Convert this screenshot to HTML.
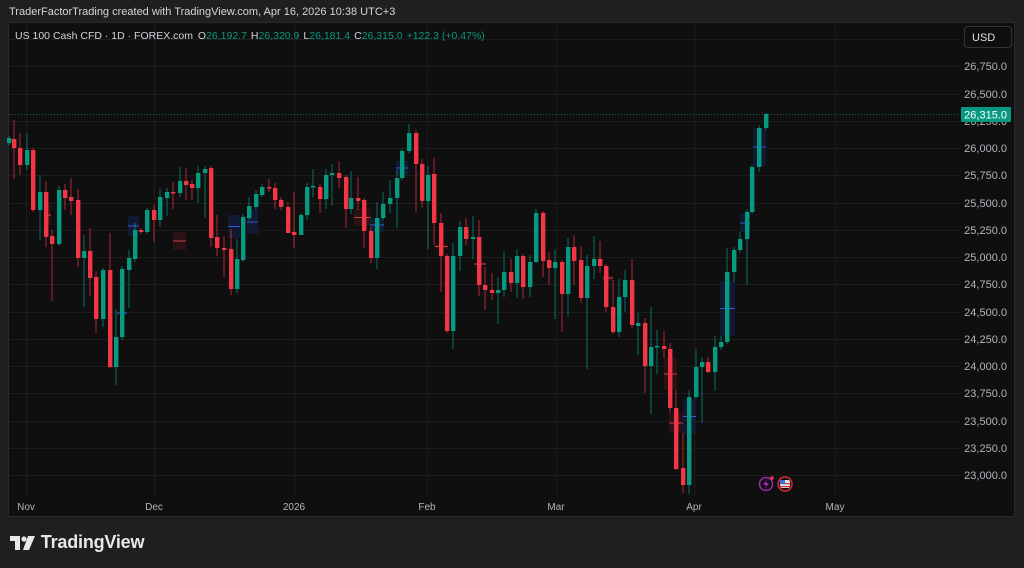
<!DOCTYPE html>
<html><head><meta charset="utf-8"><style>
html,body{margin:0;padding:0;background:#1f1f1f;width:1024px;height:568px;overflow:hidden;font-family:"Liberation Sans",sans-serif}
.top{position:absolute;left:9px;top:6px;font-size:11px;color:#d6d6d6}
.panel{position:absolute;left:8px;top:22px;width:1007px;height:495px;background:#0f0f0f;border:1px solid #2a2a2a;box-sizing:border-box}
svg{position:absolute;left:0;top:0}
.logo{position:absolute;left:10px;top:532px;color:#e8e8e8;font-size:18px;font-weight:bold;letter-spacing:-0.2px}
</style></head><body>
<div class="top">TraderFactorTrading created with TradingView.com, Apr 16, 2026 10:38 UTC+3</div>
<div class="panel"></div>
<svg id="s" width="1024" height="568" font-family="Liberation Sans, sans-serif"></svg>
<div class="logo"><span style="display:inline-block;width:26px;vertical-align:-2px"><svg width="26" height="14" viewBox="0 0 26 14" style="position:static"><path d="M0 0h10v14H5V5H0z" fill="#e8e8e8"/><circle cx="14" cy="3" r="2.6" fill="#e8e8e8"/><path d="M18 0h7l-6 14h-6z" fill="#e8e8e8"/></svg></span> TradingView</div>
<script>
const s=document.getElementById('s');let h='';
// grid
[39,66,94,121,148,175,203,230,257,284,312,339,366,393,421,448,475].forEach(y=>h+=`<line x1="9" x2="960" y1="${y}.5" y2="${y}.5" stroke="#1c1c1c"/>`);
[26,154,294,427,556,694,835].forEach(x=>h+=`<line x1="${x}.5" x2="${x}.5" y1="23" y2="496" stroke="#1c1c1c"/>`);
// shaded boxes
[[44,51,205,225,0],[128,139,216,236,1],[247,258,210,234,1],[117,127,311,315,1],[173,186,232,250,0],[228,240,215,238,1],[354,371,209,226,0],[370,384,218,232,1],[396,408,161,175,1],[435,448,244,249,0],[474,486,263,265,0],[603,613,275,281,0],[664,677,358,390,0],[669,685,413,433,0],[683,696,399,434,1],[720,735,281,336,1],[740,750,214,232,1],[753,766,128,166,1]].forEach(b=>{
 h+=`<rect x="${b[0]}" y="${b[2]}" width="${b[1]-b[0]}" height="${b[3]-b[2]}" fill="${b[4]?'#121a33':'#2a1214'}"/>`;
 h+=`<line x1="${b[0]}" x2="${b[1]}" y1="${(b[2]+b[3])/2}" y2="${(b[2]+b[3])/2}" stroke="${b[4]?'#2f5bd6':'#d33a47'}" stroke-width="1"/>`;});
// candles: x, open, close, high, low (screen y)
const c=[[9,143,138,136,145],[14,139,148,120,179],[20,148,165,133,175],[27,165,150,133,170],[33,150,210,148,212],[40,210,192,175,240],[46,192,237,181,247],[52,236,244,230,301],[59,244,190,186,246],[65,190,198,184,210],[71,197,201,178,215],[78,200,258,189,267],[84,258,251,235,307],[90,251,278,228,296],[96,277,319,271,333],[103,319,270,268,327],[110,270,367,233,368],[116,367,337,309,385],[122,337,269,266,340],[129,270,258,250,308],[135,259,230,223,262],[141,230,232,228,234],[147,232,210,208,234],[154,210,220,205,242],[160,220,197,189,227],[167,198,192,188,216],[173,192,193,182,209],[180,193,181,167,197],[186,181,185,168,200],[192,184,188,180,200],[198,188,173,166,203],[205,173,169,166,218],[211,168,238,166,247],[217,237,248,215,256],[224,248,250,236,277],[231,249,289,229,295],[237,289,259,239,293],[243,260,217,214,262],[249,218,206,197,220],[256,207,194,190,210],[262,195,187,184,197],[269,187,188,179,192],[275,188,200,183,209],[281,200,207,197,210],[288,207,233,202,233],[294,232,235,192,248],[301,235,215,213,235],[307,215,187,183,220],[313,187,186,169,197],[320,187,199,184,213],[326,199,175,169,209],[332,175,173,164,206],[339,173,178,161,188],[346,177,209,175,228],[351,209,198,171,214],[358,198,201,177,210],[364,200,231,198,248],[371,231,258,227,263],[377,258,218,202,269],[383,218,204,192,220],[390,204,198,180,213],[397,198,178,170,228],[402,178,151,149,180],[409,151,133,124,153],[416,133,164,130,212],[422,164,201,159,208],[428,201,175,166,249],[434,174,223,158,245],[441,223,256,213,292],[447,256,331,254,333],[453,331,256,243,349],[460,256,227,221,271],[466,227,239,218,245],[473,239,237,216,259],[479,237,285,220,296],[485,285,290,267,310],[492,290,293,273,300],[498,293,290,277,324],[504,290,272,251,297],[511,272,283,259,292],[517,283,256,249,298],[523,256,287,254,299],[530,287,262,255,297],[536,262,213,209,263],[543,213,261,211,277],[549,260,268,252,285],[555,268,262,250,319],[562,262,294,260,332],[568,294,247,238,316],[574,247,261,235,285],[581,260,298,246,303],[587,298,266,255,369],[594,266,259,236,279],[600,259,266,241,273],[606,266,307,264,312],[613,307,332,280,334],[619,332,297,279,337],[625,297,280,270,312],[632,280,325,259,328],[638,326,323,313,355],[645,323,366,318,393],[651,366,347,307,414],[657,347,346,330,374],[664,346,349,331,358],[670,349,408,343,413],[676,408,469,390,470],[683,468,485,433,493],[689,485,397,390,494],[696,397,367,349,399],[702,367,362,357,423],[708,362,372,357,373],[715,372,347,336,391],[721,347,342,336,350],[727,342,272,248,344],[734,272,250,247,282],[740,250,239,232,253],[747,239,212,209,285],[752,212,167,165,214],[759,167,128,125,172],[766,128,114,113,130]];
c.forEach(k=>{const up=k[2]<k[1];const col=up?'#089981':'#f23645';const t=Math.min(k[1],k[2]),b=Math.max(k[1],k[2]);
h+=`<line x1="${k[0]}" x2="${k[0]}" y1="${k[3]}" y2="${k[4]}" stroke="${col}" stroke-opacity="0.7"/>`;
h+=`<rect x="${k[0]-2}" y="${t}" width="4.4" height="${Math.max(b-t,1.5)}" fill="${col}"/>`;});
// price line
h+=`<line x1="9" x2="958" y1="114.5" y2="114.5" stroke="#089981" stroke-dasharray="1 2" stroke-opacity="0.7"/>`;
// axis labels
const P=[['26,750.0',66],['26,500.0',94],['26,250.0',121],['26,000.0',148],['25,750.0',175],['25,500.0',203],['25,250.0',230],['25,000.0',257],['24,750.0',284],['24,500.0',312],['24,250.0',339],['24,000.0',366],['23,750.0',393],['23,500.0',421],['23,250.0',448],['23,000.0',475]];
P.forEach(p=>h+=`<text x="1007" y="${p[1]+4}" text-anchor="end" font-size="11" fill="#b2b5be">${p[0]}</text>`);
h+=`<rect x="961" y="107" width="50" height="15" rx="1" fill="#089981"/><text x="1007" y="118.5" text-anchor="end" font-size="11" fill="#fff">26,315.0</text>`;
h+=`<rect x="964.5" y="26.5" width="47" height="21" rx="3" fill="#0f0f0f" stroke="#333"/><text x="972" y="41" font-size="11" fill="#e0e0e0">USD</text>`;
[['Nov',26],['Dec',154],['2026',294],['Feb',427],['Mar',556],['Apr',694],['May',835]].forEach(t=>h+=`<text x="${t[1]}" y="510" text-anchor="middle" font-size="10" fill="#b2b5be">${t[0]}</text>`);
// legend
h+=`<text x="15" y="39" font-size="10.5" fill="#d1d4dc">US 100 Cash CFD · 1D · FOREX.com <tspan dx="2">O</tspan><tspan fill="#089981">26,192.7</tspan><tspan dx="4">H</tspan><tspan fill="#089981">26,320.9</tspan><tspan dx="4">L</tspan><tspan fill="#089981">26,181.4</tspan><tspan dx="4">C</tspan><tspan fill="#089981">26,315.0</tspan><tspan dx="4" fill="#089981">+122.3 (+0.47%)</tspan></text>`;
// icons
h+=`<circle cx="766" cy="484" r="6.5" fill="#0f0f0f" stroke="#9c27b0" stroke-width="1.5"/><path d="M767 479l-4 6h3l-1 4 4-6h-3z" fill="#9c27b0"/><circle cx="772" cy="478" r="1.8" fill="#f23645"/>`;
h+=`<circle cx="785" cy="484" r="7" fill="#0f0f0f" stroke="#d12d3d" stroke-width="1.5"/><rect x="780" y="480" width="10" height="8" rx="2" fill="#e6e6e6"/><rect x="780" y="483" width="10" height="1.2" fill="#d12d3d"/><rect x="780" y="486" width="10" height="1.2" fill="#d12d3d"/><rect x="780" y="480" width="5" height="4" fill="#3d6fd8"/>`;
s.innerHTML=h;
</script>
</body></html>
